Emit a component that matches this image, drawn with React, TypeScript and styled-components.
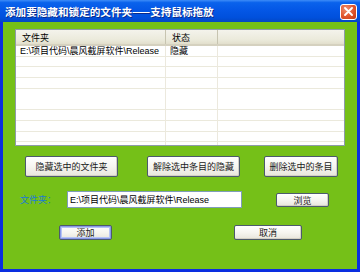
import React from 'react';
import styled, { createGlobalStyle, css } from 'styled-components';

const GlobalStyle = createGlobalStyle`
  *, *::before, *::after {
    box-sizing: border-box;
  }
  html, body {
    margin: 0;
    padding: 0;
    background: #ffffff;
  }
  body {
    font-family: "Liberation Sans", "Noto Sans CJK SC", sans-serif;
  }
`;

const Window = styled.div`
  width: 360px;
  height: 272px;
  display: flex;
  flex-direction: column;
  overflow: hidden;
`;

const TitleBar = styled.div`
  height: 22px;
  flex: none;
  display: flex;
  align-items: center;
  justify-content: space-between;
  padding: 0 3px 0 5px;
  background: linear-gradient(
    #3d8cf8 0%,
    #0a62ec 12%,
    #0457e6 45%,
    #0050dc 80%,
    #0347c4 100%
  );
`;

const Title = styled.span`
  color: #ffffff;
  font-family: "Noto Sans CJK SC", sans-serif;
  font-size: 10.6px;
  font-weight: 700;
  text-shadow: 1px 1px 0 #0a2a8a;
`;

const CloseButton = styled.div`
  width: 17px;
  height: 16px;
  border: 1px solid #ffffff;
  border-radius: 3px;
  background: radial-gradient(circle at 35% 30%, #f09070 0%, #e0542c 55%, #c23a14 100%);
  display: flex;
  align-items: center;
  justify-content: center;
  margin-top: 1px;
`;

const Body = styled.div`
  flex: 1;
  background: #75c018;
  border-left: 3px solid #0a2ee0;
  border-right: 3px solid #0a2ee0;
  border-bottom: 3px solid #0a2ee0;
  padding-top: 7px;
  display: flex;
  flex-direction: column;
`;

const ListView = styled.div`
  margin: 0 12px;
  height: 117px;
  background: #ffffff;
  border: 1px solid #8e9ba8;
  display: flex;
  flex-direction: column;
  font-family: "Liberation Sans", "Noto Sans CJK SC", sans-serif;
  font-size: 9px;
  color: #000000;
`;

const HeaderRow = styled.div`
  height: 16px;
  flex: none;
  display: flex;
  background: linear-gradient(#f4f3ec 0%, #ebeadb 70%, #e2dfcc 100%);
  border-bottom: 2px solid #d5d1bf;
`;

const cellCss = css<{ $w?: number }>`
  ${({ $w }) => ($w ? `width: ${$w}px; flex: none;` : 'flex: 1;')}
  padding-left: 6px;
  display: flex;
  align-items: center;
  white-space: nowrap;
  overflow: hidden;
`;

const HeaderCell = styled.div<{ $w?: number }>`
  ${cellCss}
  border-right: 1px solid #c7c4b0;
  &:last-child {
    border-right: none;
  }
`;

const Rows = styled.div`
  flex: 1;
  background-color: #ffffff;
  background-image:
    linear-gradient(to right, transparent 149px, #ece9de 149px, #ece9de 150px, transparent 150px,
      transparent 201px, #ece9de 201px, #ece9de 202px, transparent 202px),
    repeating-linear-gradient(to bottom, transparent 0, transparent 9.7px, #ebe9dc 9.7px, #ebe9dc 10.7px);
`;

const DataRow = styled.div`
  height: 10.7px;
  display: flex;
`;

const DataCell = styled.div<{ $w?: number }>`
  ${cellCss}
  padding-left: 4px;
  line-height: 10px;
`;

const ButtonRow = styled.div<{ $mt: number }>`
  display: flex;
  align-items: center;
  margin-top: ${({ $mt }) => $mt}px;
`;

const Button = styled.button<{ $w: number; $h: number; $ml: number; $default?: boolean }>`
  width: ${({ $w }) => $w}px;
  height: ${({ $h }) => $h}px;
  margin-left: ${({ $ml }) => $ml}px;
  padding: 0;
  flex: none;
  font-family: "Noto Sans CJK SC", sans-serif;
  font-size: 9px;
  color: #1a1a1a;
  background: linear-gradient(#ffffff 0%, #f6f5f0 50%, #e8e6dc 100%);
  border: 1px solid #4c5a6c;
  border-radius: 2px;
  box-shadow: ${({ $default }) =>
    $default ? 'inset 0 0 0 1px #8a9ae8, inset 0 0 0 2px #b6c4f4' : 'inset -1px -1px 0 #d4d0c4'};
`;

const FieldLabel = styled.span`
  margin-left: 17px;
  width: 47px;
  flex: none;
  color: #1c7ad4;
  font-family: "Noto Sans CJK SC", sans-serif;
  font-size: 9px;
`;

const PathInput = styled.div`
  width: 175px;
  height: 17px;
  flex: none;
  background: #ffffff;
  border: 1px solid #7f9db9;
  padding-left: 2px;
  display: flex;
  align-items: center;
  font-family: "Liberation Sans", "Noto Sans CJK SC", sans-serif;
  font-size: 9px;
  color: #000000;
  white-space: nowrap;
  overflow: hidden;
`;

const XIcon = () => (
  <svg width="9" height="9" viewBox="0 0 9 9">
    <path d="M1 1 L8 8 M8 1 L1 8" stroke="#ffffff" strokeWidth="1.8" strokeLinecap="round" />
  </svg>
);

const path = 'E:\\项目代码\\晨风截屏软件\\Release';

export default function App() {
  return (
    <>
      <GlobalStyle />
      <Window>
        <TitleBar>
          <Title>添加要隐藏和锁定的文件夹——支持鼠标拖放</Title>
          <CloseButton>
            <XIcon />
          </CloseButton>
        </TitleBar>
        <Body>
          <ListView>
            <HeaderRow>
              <HeaderCell $w={150}>文件夹</HeaderCell>
              <HeaderCell $w={52}>状态</HeaderCell>
              <HeaderCell />
            </HeaderRow>
            <Rows>
              <DataRow>
                <DataCell $w={150}>{path}</DataCell>
                <DataCell $w={52}>隐藏</DataCell>
                <DataCell />
              </DataRow>
            </Rows>
          </ListView>

          <ButtonRow $mt={10}>
            <Button $w={93} $h={21} $ml={22}>隐藏选中的文件夹</Button>
            <Button $w={93} $h={21} $ml={29}>解除选中条目的隐藏</Button>
            <Button $w={74} $h={21} $ml={24}>删除选中的条目</Button>
          </ButtonRow>

          <ButtonRow $mt={14}>
            <FieldLabel>文件夹：</FieldLabel>
            <PathInput>{path}</PathInput>
            <Button $w={53} $h={14} $ml={34}>浏览</Button>
          </ButtonRow>

          <ButtonRow $mt={17}>
            <Button $w={53} $h={15} $ml={56} $default>添加</Button>
            <Button $w={68} $h={15} $ml={122}>取消</Button>
          </ButtonRow>
        </Body>
      </Window>
    </>
  );
}
